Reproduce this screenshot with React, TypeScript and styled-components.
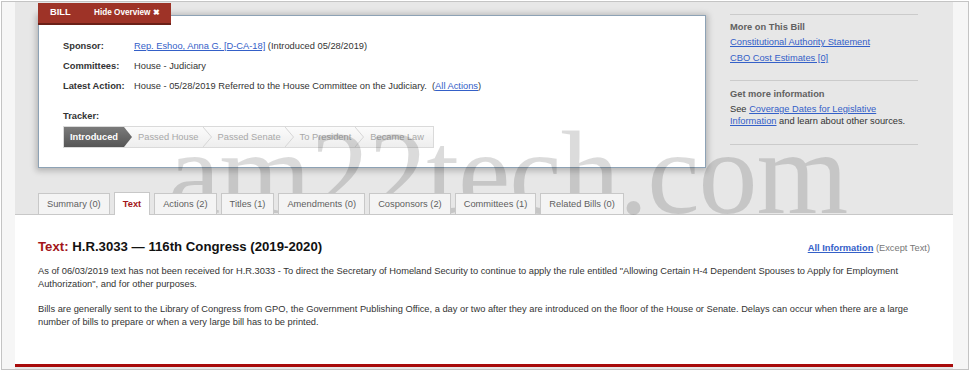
import React from "react";
import styled, { createGlobalStyle } from "styled-components";

const Global = createGlobalStyle`
  html, body { margin: 0; padding: 0; background: #ffffff; }
  body { font-family: "Liberation Sans", Arial, sans-serif; font-size: 9.3px; color: #333; }
  * { box-sizing: border-box; }
`;

const Frame = styled.div`
  position: relative;
  width: 968px;
  height: 369px;
  margin: 1px 0 0 1px;
  border: 1px solid #c4c4c4;
  background: #f6f6f6;
  padding: 0 14px 0 13px;
  overflow: hidden;
`;

const Page = styled.div`
  width: 938px;
  height: 100%;
  display: flex;
  flex-direction: column;
  background: #e7e7e7;
  padding-bottom: 2px;
`;

const Top = styled.div`
  padding: 1px 0 0 23px;
`;

const Upper = styled.div`
  display: flex;
  align-items: flex-start;
`;

const Overview = styled.div`
  width: 668px;
  display: flex;
  flex-direction: column;
`;

const BillTab = styled.div`
  position: relative;
  z-index: 2;
  align-self: flex-start;
  display: flex;
  align-items: center;
  width: 133px;
  height: 22px;
  padding: 0 0 2px 12px;
  background: #9e3327;
  border-bottom: 2px solid #6a2017;
  margin-bottom: -10px;
  color: #fff;
  font-weight: bold;
`;

const BillLabel = styled.span`
  font-size: 9.3px;
  width: 44px;
`;

const HideLink = styled.span`
  font-size: 8.2px;
  font-weight: bold;
`;

const Card = styled.div`
  height: 153px;
  background: #fff;
  border: 1px solid #8da2b5;
  box-shadow: 0 1px 6px 2px rgba(0, 0, 0, 0.22);
  padding: 20px 24px 0;
`;

const InfoRow = styled.div`
  display: flex;
  align-items: center;
  height: 20px;
`;

const Label = styled.span`
  width: 71px;
  flex: none;
  font-weight: bold;
  color: #333;
`;

const Value = styled.span`
  color: #333;
`;

const Link = styled.a<{ $bold?: boolean }>`
  color: #3460c8;
  text-decoration: underline;
  font-weight: ${(p) => (p.$bold ? "bold" : "normal")};
  cursor: pointer;
`;

const TrackerLabel = styled.div`
  margin-top: 14px;
  line-height: 13px;
  margin-bottom: 3px;
  font-weight: bold;
  color: #333;
`;

const Tracker = styled.div`
  display: inline-flex;
  align-items: stretch;
  height: 22px;
  border: 1px solid #dadada;
  background: linear-gradient(#fbfbfb, #eeeeee);
`;

const Step = styled.div<{ $active?: boolean; $last?: boolean }>`
  display: flex;
  align-items: center;
  padding: 0 ${(p) => (p.$active ? 6 : p.$last ? 9 : 4)}px 0 6px;
  color: ${(p) => (p.$active ? "#fff" : "#a8a8a8")};
  font-weight: ${(p) => (p.$active ? "bold" : "normal")};
  background: ${(p) => (p.$active ? "linear-gradient(#7a7a7a, #555555)" : "transparent")};
  white-space: nowrap;
`;

const Sep = styled.svg`
  display: block;
  flex: none;
`;

const Sidebar = styled.div`
  width: 188px;
  margin-left: 24px;
  padding-top: 11px;
`;

const Divider = styled.div`
  height: 1px;
  background: #cbcbcb;
`;

const SideSection = styled.div<{ $top: number; $bottom: number }>`
  padding: ${(p) => p.$top}px 0 ${(p) => p.$bottom}px;
`;

const SideHeading = styled.div`
  font-weight: bold;
  color: #606060;
  line-height: 14px;
`;

const SideLink = styled.div`
  line-height: 16px;
`;

const SideText = styled.div`
  margin-top: 2px;
  line-height: 12px;
  color: #333;
`;

const TabBar = styled.div`
  position: relative;
  z-index: 2;
  display: flex;
  align-items: flex-end;
  gap: 4px;
  height: 22px;
  margin-top: 24px;
`;

const Tab = styled.div<{ $active?: boolean }>`
  display: flex;
  align-items: center;
  height: ${(p) => (p.$active ? 23 : 22)}px;
  margin-bottom: -1px;
  padding: 0 8px ${(p) => (p.$active ? 1 : 0)}px;
  border: 1px solid #c8c8c8;
  border-bottom: ${(p) => (p.$active ? "none" : "1px solid #c8c8c8")};
  background: ${(p) => (p.$active ? "#fff" : "#f4f4f4")};
  color: ${(p) => (p.$active ? "#a3161a" : "#5f5f5f")};
  font-weight: ${(p) => (p.$active ? "bold" : "normal")};
  white-space: nowrap;
`;

const Content = styled.div`
  flex: 1;
  background: #fff;
  border-top: 1px solid #c8c8c8;
  padding: 23px 23px 0;
`;

const HeaderRow = styled.div`
  display: flex;
  justify-content: space-between;
  align-items: baseline;
`;

const Title = styled.h1`
  margin: 0;
  font-size: 13.2px;
  line-height: 18px;
  font-weight: bold;
  color: #111;
`;

const TitleAccent = styled.span`
  color: #a3161a;
`;

const Aside = styled.span`
  color: #777;
`;

const Para = styled.p<{ $gap: number }>`
  margin: ${(p) => p.$gap}px 0 0;
  line-height: 13px;
  color: #333;
`;

const RedBar = styled.div`
  height: 3px;
  background: #a80b0b;
`;

const Watermark = styled.div`
  position: absolute;
  left: 166px;
  top: 113px;
  z-index: 1;
  font-family: "Liberation Serif", "Times New Roman", serif;
  font-size: 118px;
  letter-spacing: -1px;
  line-height: 1;
  color: rgba(0, 0, 0, 0.14);
  pointer-events: none;
  white-space: nowrap;
`;

const Chevron = () => (
  <Sep width="9" height="20" viewBox="0 0 9 20">
    <polyline points="0,0 8.5,10 0,20" fill="none" stroke="#d6d6d6" strokeWidth="1" />
  </Sep>
);

const Tip = () => (
  <Sep width="8" height="20" viewBox="0 0 8 20">
    <defs>
      <linearGradient id="tipg" x1="0" y1="0" x2="0" y2="1">
        <stop offset="0" stopColor="#7a7a7a" />
        <stop offset="1" stopColor="#555555" />
      </linearGradient>
    </defs>
    <polygon points="0,0 8,10 0,20" fill="url(#tipg)" />
  </Sep>
);

const tabs = [
  "Summary (0)",
  "Text",
  "Actions (2)",
  "Titles (1)",
  "Amendments (0)",
  "Cosponsors (2)",
  "Committees (1)",
  "Related Bills (0)",
];

export default function App() {
  return (
    <>
      <Global />
      <Frame>
        <Page>
          <Top>
            <Upper>
              <Overview>
                <BillTab>
                  <BillLabel>BILL</BillLabel>
                  <HideLink>Hide Overview ✖</HideLink>
                </BillTab>
                <Card>
                  <InfoRow>
                    <Label>Sponsor:</Label>
                    <Value>
                      <Link>Rep. Eshoo, Anna G. [D-CA-18]</Link> (Introduced 05/28/2019)
                    </Value>
                  </InfoRow>
                  <InfoRow>
                    <Label>Committees:</Label>
                    <Value>House - Judiciary</Value>
                  </InfoRow>
                  <InfoRow>
                    <Label>Latest Action:</Label>
                    <Value>
                      House - 05/28/2019 Referred to the House Committee on the Judiciary.&nbsp;
                      (<Link>All Actions</Link>)
                    </Value>
                  </InfoRow>
                  <TrackerLabel>Tracker:</TrackerLabel>
                  <Tracker>
                    <Step $active>Introduced</Step>
                    <Tip />
                    <Step>Passed House</Step>
                    <Chevron />
                    <Step>Passed Senate</Step>
                    <Chevron />
                    <Step>To President</Step>
                    <Chevron />
                    <Step $last>Became Law</Step>
                  </Tracker>
                </Card>
              </Overview>
              <Sidebar>
                <Divider />
                <SideSection $top={5} $bottom={14}>
                  <SideHeading>More on This Bill</SideHeading>
                  <SideLink>
                    <Link>Constitutional Authority Statement</Link>
                  </SideLink>
                  <SideLink>
                    <Link>CBO Cost Estimates [0]</Link>
                  </SideLink>
                </SideSection>
                <Divider />
                <SideSection $top={6} $bottom={17}>
                  <SideHeading>Get more information</SideHeading>
                  <SideText>
                    See <Link>Coverage Dates for Legislative Information</Link> and learn about other
                    sources.
                  </SideText>
                </SideSection>
                <Divider />
              </Sidebar>
            </Upper>
            <TabBar>
              {tabs.map((t) => (
                <Tab key={t} $active={t === "Text"}>
                  {t}
                </Tab>
              ))}
            </TabBar>
          </Top>
          <Content>
            <HeaderRow>
              <Title>
                <TitleAccent>Text:</TitleAccent> H.R.3033 — 116th Congress (2019-2020)
              </Title>
              <span>
                <Link $bold>All Information</Link> <Aside>(Except Text)</Aside>
              </span>
            </HeaderRow>
            <Para $gap={9}>
              As of 06/03/2019 text has not been received for H.R.3033 - To direct the Secretary of
              Homeland Security to continue to apply the rule entitled "Allowing Certain H-4
              Dependent Spouses to Apply for Employment Authorization", and for other purposes.
            </Para>
            <Para $gap={12}>
              Bills are generally sent to the Library of Congress from GPO, the Government Publishing
              Office, a day or two after they are introduced on the floor of the House or Senate.
              Delays can occur when there are a large number of bills to prepare or when a very large
              bill has to be printed.
            </Para>
          </Content>
          <RedBar />
        </Page>
        <Watermark>am22tech.com</Watermark>
      </Frame>
    </>
  );
}
